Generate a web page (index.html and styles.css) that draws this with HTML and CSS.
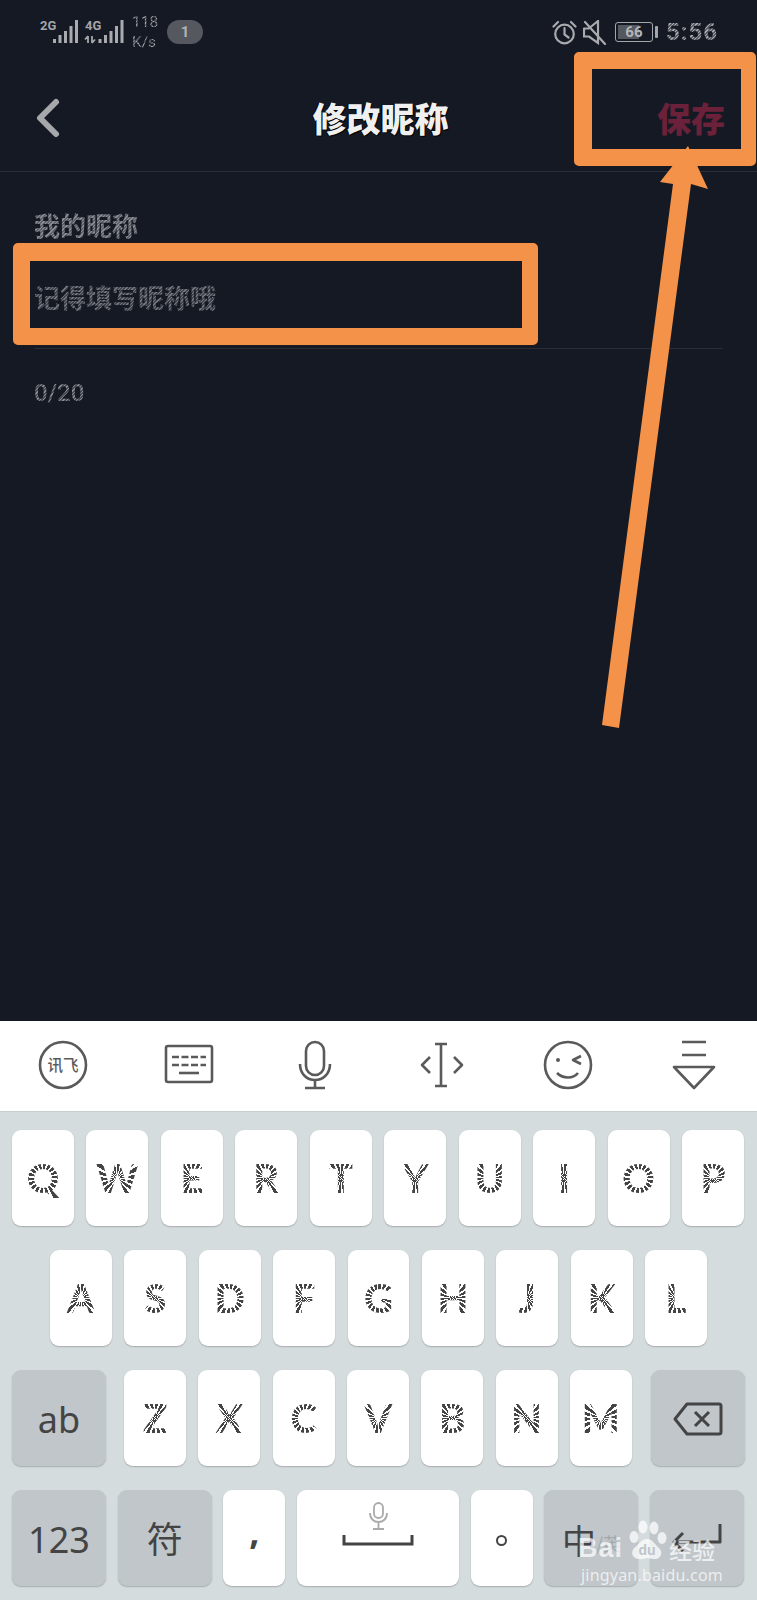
FILE: index.html
```html
<!DOCTYPE html>
<html lang="zh-CN">
<head>
<meta charset="utf-8">
<title>修改昵称</title>
<link rel="stylesheet" href="styles.css">
</head>
<body>
<div class="phone">
  <section class="screen">
    <div class="status">
      <svg class="signal" width="84" height="26" viewBox="0 0 84 26">
        <text class="net" x="0" y="11">2G</text>
        <g class="bars">
          <rect x="13" y="20" width="3" height="4"/><rect x="18.500" y="16" width="3" height="8"/><rect x="24" y="12" width="3" height="12"/><rect x="29.500" y="7" width="3" height="17"/><rect x="35" y="1" width="3" height="23"/>
        </g>
        <text class="net" x="45" y="11">4G</text>
        <path class="arrows" d="M48 17v7M48 17l-3 3.500M52 17v7M52 24l3-3.500"/>
        <g class="bars">
          <rect x="58.500" y="20" width="3" height="4"/><rect x="64" y="16" width="3" height="8"/><rect x="69.500" y="12" width="3" height="12"/><rect x="75" y="7" width="3" height="17"/><rect x="80.500" y="1" width="3" height="23"/>
        </g>
      </svg>
      <div class="speed"><span class="hatch">118</span><span class="hatch">K/s</span></div>
      <div class="badge">1</div>
      <div class="status-right">
        <svg width="25" height="25" viewBox="0 0 25 25" class="st-icon">
          <circle cx="12.500" cy="14" r="9.300"/>
          <path d="M12.500 8v6.500l4 3M1.500 6.500l4.500-4.500M23.500 6.500L19 2"/>
        </svg>
        <svg width="24" height="25" viewBox="0 0 24 25" class="st-icon">
          <path d="M1 8.500h5M1 8.500v8h5l9 6.500V1L7 7.500M2 2l20 22"/>
        </svg>
        <div class="battery"><div class="battery-body"><div class="battery-fill"></div><span class="battery-num">66</span></div><div class="battery-cap"></div></div>
        <div class="time hatch">5:56</div>
      </div>
    </div>
    <header class="nav">
      <div class="nav-left">
        <svg width="24" height="40" viewBox="0 0 24 40" class="back"><path d="M20 4L4 20l16 16"/></svg>
      </div>
      <h1 class="title">修改昵称</h1>
      <div class="save">保存</div>
    </header>
    <main class="form">
      <div class="label hatch">我的昵称</div>
      <div class="input"><span class="placeholder hatch">记得填写昵称哦</span></div>
      <div class="count hatch">0/20</div>
    </main>
  </section>

  <section class="keyboard">
    <div class="toolbar">
      <div class="tool">
        <svg width="50" height="50" viewBox="0 0 50 50" class="tool-icon">
          <circle cx="25" cy="25" r="23"/>
          <text class="logo-text" x="25" y="31">讯飞</text>
        </svg>
      </div>
      <div class="tool">
        <svg width="50" height="42" viewBox="0 0 50 42" class="tool-icon">
          <rect x="2" y="2" width="46" height="36" rx="2"/>
          <path class="dash" d="M8 13h34M8 21h34"/><path d="M15 29h20"/>
        </svg>
      </div>
      <div class="tool">
        <svg width="34" height="50" viewBox="0 0 34 50" class="tool-icon">
          <rect x="8" y="2" width="18" height="33" rx="9"/>
          <path d="M2 24c0 10 7 16 15 16s15-6 15-16M17 40v8M7 48h20"/>
        </svg>
      </div>
      <div class="tool">
        <svg width="44" height="46" viewBox="0 0 44 46" class="tool-icon">
          <path d="M15 2h12M21 2v42M15 44h12M10 15l-8 8 8 8M34 15l8 8-8 8"/>
        </svg>
      </div>
      <div class="tool">
        <svg width="50" height="50" viewBox="0 0 50 50" class="tool-icon">
          <circle cx="25" cy="25" r="23"/>
          <circle class="eye" cx="15" cy="20" r="2"/>
          <path d="M38 16l-8 4 8 4M14 33c6 6 16 6 21 0"/>
        </svg>
      </div>
      <div class="tool">
        <svg width="44" height="50" viewBox="0 0 44 50" class="tool-icon">
          <path d="M10 2h24M10 15h24M2 27h40L22 48z"/>
        </svg>
      </div>
    </div>
    <div class="keys">
      <div class="row row-top">
        <div class="key"><span class="glyph">Q</span></div>
        <div class="key"><span class="glyph">W</span></div>
        <div class="key"><span class="glyph">E</span></div>
        <div class="key"><span class="glyph">R</span></div>
        <div class="key"><span class="glyph">T</span></div>
        <div class="key"><span class="glyph">Y</span></div>
        <div class="key"><span class="glyph">U</span></div>
        <div class="key"><span class="glyph">I</span></div>
        <div class="key"><span class="glyph">O</span></div>
        <div class="key"><span class="glyph">P</span></div>
      </div>
      <div class="row row-mid">
        <div class="key"><span class="glyph">A</span></div>
        <div class="key"><span class="glyph">S</span></div>
        <div class="key"><span class="glyph">D</span></div>
        <div class="key"><span class="glyph">F</span></div>
        <div class="key"><span class="glyph">G</span></div>
        <div class="key"><span class="glyph">H</span></div>
        <div class="key"><span class="glyph">J</span></div>
        <div class="key"><span class="glyph">K</span></div>
        <div class="key"><span class="glyph">L</span></div>
      </div>
      <div class="row row-low">
        <div class="key fn wide label-key">ab</div>
        <div class="letters">
          <div class="key"><span class="glyph">Z</span></div>
          <div class="key"><span class="glyph">X</span></div>
          <div class="key"><span class="glyph">C</span></div>
          <div class="key"><span class="glyph">V</span></div>
          <div class="key"><span class="glyph">B</span></div>
          <div class="key"><span class="glyph">N</span></div>
          <div class="key"><span class="glyph">M</span></div>
        </div>
        <div class="key fn wide del">
          <svg width="50" height="34" viewBox="0 0 50 34" class="key-icon">
            <path d="M14 2h32a2 2 0 0 1 2 2v26a2 2 0 0 1-2 2H14L2 17zM22 10l14 14M36 10L22 24"/>
          </svg>
        </div>
      </div>
      <div class="row row-bottom">
        <div class="key fn wide label-key">123</div>
        <div class="key fn wide label-key">符</div>
        <div class="key narrow comma">,</div>
        <div class="key space">
          <svg width="20" height="28" viewBox="0 0 20 28" class="space-mic">
            <rect x="6" y="1" width="9" height="15" rx="4.500"/>
            <path d="M2 11c0 6 4 9 8.500 9s8.500-3 8.500-9M10.500 20v6M5 27h11"/>
          </svg>
          <svg width="72" height="12" viewBox="0 0 72 12" class="space-bar"><path d="M2 1v9h68V1"/></svg>
        </div>
        <div class="key narrow"><span class="dot"></span></div>
        <div class="key fn wide lang"><span class="zh">中</span><span class="en">/英</span></div>
        <div class="key fn wide">
          <svg width="50" height="30" viewBox="0 0 50 30" class="key-icon enter">
            <path d="M48 1v18H2M11 10l-9 9 9 9"/>
          </svg>
        </div>
      </div>
    </div>
  </section>

  <div class="mark mark-nick"></div>
  <div class="mark mark-save"></div>
  <svg class="arrow" width="757" height="760" viewBox="0 0 757 760">
    <path d="M688 146L708 189 691 184 619 728 602 725 673 184 660 182z"/>
  </svg>
  <div class="watermark">
    <div class="wm-top">
      <span class="wm-bai">Bai</span>
      <svg width="40" height="42" viewBox="0 0 40 42" class="wm-paw">
        <ellipse cx="7" cy="17" rx="4.500" ry="6"/><ellipse cx="16" cy="7" rx="4.500" ry="6.500"/><ellipse cx="27" cy="8" rx="4.500" ry="6.500"/><ellipse cx="35" cy="18" rx="4.500" ry="6"/>
        <path d="M20 19c6 0 8 6 12 9 5 5 1 12-5 11-3 0-5-1-7-1s-5 2-8 1c-6 0-9-6-5-11 5-3 7-9 13-9z"/>
        <text class="wm-du" x="20" y="35">du</text>
      </svg>
      <span class="wm-jy">经验</span>
    </div>
    <div class="wm-url">jingyan.baidu.com</div>
  </div>
</div>
</body>
</html>
```
FILE: styles.css
```css
* { box-sizing: border-box; }
html, body { margin: 0; padding: 0; }
body { font-family: "Noto Sans CJK SC", "Noto Sans", sans-serif; background: #151924; }

.phone { position: relative; width: 757px; height: 1600px; overflow: hidden; }

/* dark screen */
.screen { height: 1021px; background: #151924; display: flex; flex-direction: column; }

.hatch { color: transparent; -webkit-background-clip: text; background-clip: text; background-image: repeating-linear-gradient(135deg, #a9abb0 0 1px, #5c5f67 1px 2.400px); }

.status { height: 64px; display: flex; align-items: center; padding: 0 40px; color: #8f9197; }
.signal { flex: none; }
.net { font: 700 13px "Roboto", sans-serif; fill: #a4a6aa; }
.bars rect { fill: #a9abaf; }
.arrows { fill: none; stroke: #a4a6aa; stroke-width: 1.800; }
.speed { display: flex; flex-direction: column; margin-left: 8px; font: 15.500px/20px "Roboto", sans-serif; }
.badge { margin-left: 9px; width: 36px; height: 24px; border-radius: 12px; background: #55585f; color: #b0b2b6; font: 700 15px/24px "Roboto", sans-serif; text-align: center; }
.status-right { margin-left: auto; display: flex; align-items: center; }
.st-icon { fill: none; stroke: #a8aaae; stroke-width: 2.200; stroke-linecap: round; flex: none; }
.st-icon + .st-icon { margin-left: 6px; }
.battery { display: flex; align-items: center; margin-left: 8px; }
.battery-body { position: relative; width: 38px; height: 20px; border: 1px solid #a4a6aa; border-radius: 3px; padding: 2px; }
.battery-fill { width: 66%; height: 100%; background: #55585f; }
.battery-num { position: absolute; inset: 0; text-align: center; font: 700 15px/18px "Roboto", sans-serif; color: #b4b6ba; }
.battery-cap { width: 3px; height: 12px; margin-left: 2px; background: #a4a6aa; border-radius: 1px; }
.time { margin-left: 8px; font: 700 24px/24px "Roboto", sans-serif; letter-spacing: 1px; margin-right: -1px; }

.nav { height: 108px; flex: none; display: grid; grid-template-columns: 1fr auto 1fr; align-items: center; padding: 0 32px 0 36px; border-bottom: 1px solid #2a2d36; }
.back { display: block; fill: none; stroke: #a7a8ac; stroke-width: 6; stroke-linecap: round; stroke-linejoin: round; }
.title { margin: 0; font-size: 34px; line-height: 48px; font-weight: 900; color: #f0f0f0; text-shadow: 1px 1px 0 #000, -1px 0 0 #000; }
.save { text-align: right; font-size: 34px; line-height: 48px; font-weight: 900; color: #6b2139; }

.form { padding: 35px 34px 0; }
.label { font-size: 26px; line-height: 36px; font-weight: 700; background-image: repeating-linear-gradient(135deg, #8b8d93 0 1px, #5f626a 1px 2.400px); }
.input { margin-top: 36px; padding-bottom: 33px; font-size: 26px; line-height: 36px; font-weight: 700; border-bottom: 1px solid #2a2d36; }
.placeholder { background-image: repeating-linear-gradient(135deg, #73767d 0 1px, #43464e 1px 2.400px); }
.count { margin-top: 29px; font: 500 24px/30px "Roboto", sans-serif; background-image: repeating-linear-gradient(135deg, #8b8d93 0 1px, #4b4e56 1px 2.400px); }

/* keyboard */
.keyboard { height: 579px; background: #d5dcde; }
.toolbar { height: 91px; background: #fff; border-bottom: 1px solid #c9cfd1; display: grid; grid-template-columns: repeat(6, 1fr); align-items: center; justify-items: center; padding-bottom: 2px; }
.tool { display: flex; align-items: center; justify-content: center; }
.tool-icon { display: block; fill: none; stroke: #5a5a5a; stroke-width: 2.600; stroke-linejoin: round; }
.tool-icon .dash { stroke-dasharray: 7 2.500; }
.tool-icon .eye { fill: #5a5a5a; stroke: none; }
.logo-text { fill: #5a5a5a; stroke: none; font-size: 15.500px; font-weight: 500; text-anchor: middle; }

.keys { padding-top: 18px; display: flex; flex-direction: column; gap: 24px; }
.row { display: flex; height: 96px; }
.row-top { padding: 0 13px 0 12px; gap: 12.400px; }
.row-mid { padding: 0 50px; gap: 12.400px; }
.row-low { padding: 0 12px; justify-content: space-between; }
.letters { display: flex; gap: 12.300px; margin-left: -1px; }
.row-bottom { padding: 0 12px; gap: 11.700px; }

.key { flex: 1 1 62px; width: 62px; height: 96px; background: #fff; border-radius: 9px; box-shadow: 0 1px 1.500px rgba(0,0,0,.22); display: flex; align-items: center; justify-content: center; color: #444; }
.fn { background: #c0c6ca; }
.wide { flex: 0 0 94px; width: 94px; }
.narrow { flex: 0 0 62px; }
.space { flex: 0 0 162px; flex-direction: column; justify-content: flex-start; padding-top: 12px; gap: 4px; }
.label-key { font: 36px/96px "Noto Sans", "Noto Sans CJK SC", sans-serif; color: #444; padding-top: 4px; }
.comma { font: 700 36px/96px "Noto Sans", sans-serif; padding-bottom: 14px; }
.del { padding-top: 2px; }

.glyph { display: block; width: 100%; height: 100%; text-align: center; font: 900 40px/96px "Lato", sans-serif; color: transparent; background: repeating-conic-gradient(#444 0 12deg, transparent 12deg 20deg); -webkit-background-clip: text; background-clip: text; }

.dot { display: block; width: 11px; height: 11px; border: 2.500px solid #444; border-radius: 50%; margin-top: 4px; }
.key-icon { display: block; fill: none; stroke: #444; stroke-width: 3; stroke-linejoin: round; }
.space-mic { display: block; fill: none; stroke: #aaa; stroke-width: 1.800; }
.space-bar { display: block; fill: none; stroke: #444; stroke-width: 3; }
.lang { padding-top: 4px; }
.zh { font-size: 34px; line-height: 92px; color: #444; }
.en { font-size: 18px; color: #a4a9ad; margin-top: 6px; }

/* annotations laid over the picture */
.mark { position: absolute; border-style: solid; border-color: #f4924a; border-radius: 5px; box-shadow: 0 0 1px #5a2c0c; }
.mark-nick { left: 13px; top: 243px; width: 525px; height: 102px; border-width: 18px 16px 17px 17px; }
.mark-save { left: 574px; top: 52px; width: 182px; height: 114px; border-width: 17px 15px 17px 18px; }
.arrow { position: absolute; left: 0; top: 0; }
.arrow path { fill: #f4924a; }

.watermark { position: absolute; left: 578px; top: 1518px; width: 140px; color: rgba(255,255,255,.72); }
.wm-top { display: flex; align-items: flex-end; height: 44px; }
.wm-bai { font: 700 27px/27px "Liberation Sans", sans-serif; letter-spacing: 1px; width: 49px; }
.wm-paw { display: block; fill: rgba(255,255,255,.72); flex: none; }
.wm-du { fill: #bfc5c9; font: 700 14px "Liberation Sans", sans-serif; text-anchor: middle; }
.wm-jy { margin-left: 2px; font-size: 23px; line-height: 26px; font-weight: 500; white-space: nowrap; }
.wm-url { font: 16px/20px "Noto Sans", sans-serif; letter-spacing: .2px; white-space: nowrap; margin: 3px 0 0 3px; }
```
